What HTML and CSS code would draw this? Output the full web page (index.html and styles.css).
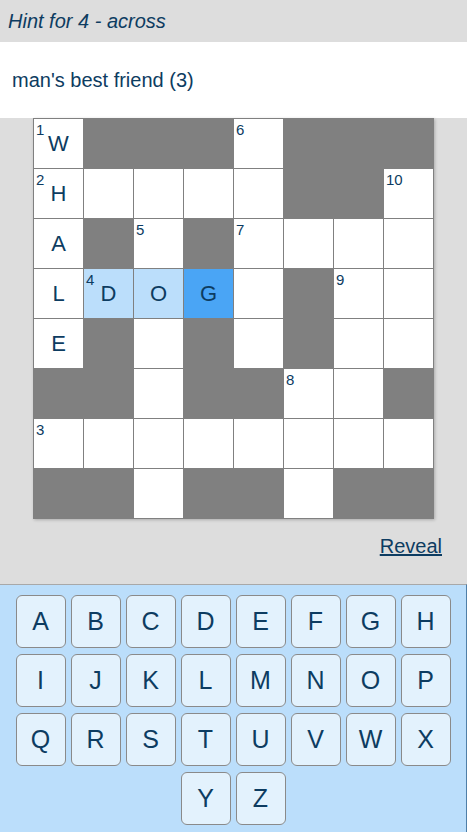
FILE: index.html
```html
<!DOCTYPE html>
<html>
<head>
<meta charset="utf-8">
<link rel="stylesheet" href="styles.css">
</head>
<body>
<div class="app">
  <div class="hint-title">Hint for 4 - across</div>
  <div class="hint-text">man's best friend (3)</div>
  <main class="board">
    <div class="grid">
      <div class="cell"><span class="num">1</span>W</div>
      <div class="cell blk"></div><div class="cell blk"></div><div class="cell blk"></div>
      <div class="cell"><span class="num">6</span></div>
      <div class="cell blk"></div><div class="cell blk"></div><div class="cell blk"></div>

      <div class="cell"><span class="num">2</span>H</div>
      <div class="cell"></div><div class="cell"></div><div class="cell"></div><div class="cell"></div>
      <div class="cell blk"></div><div class="cell blk"></div>
      <div class="cell"><span class="num">10</span></div>

      <div class="cell">A</div>
      <div class="cell blk"></div>
      <div class="cell"><span class="num">5</span></div>
      <div class="cell blk"></div>
      <div class="cell"><span class="num">7</span></div>
      <div class="cell"></div><div class="cell"></div><div class="cell"></div>

      <div class="cell">L</div>
      <div class="cell hl"><span class="num">4</span>D</div>
      <div class="cell hl">O</div>
      <div class="cell active">G</div>
      <div class="cell"></div>
      <div class="cell blk"></div>
      <div class="cell"><span class="num">9</span></div>
      <div class="cell"></div>

      <div class="cell">E</div>
      <div class="cell blk"></div>
      <div class="cell"></div>
      <div class="cell blk"></div>
      <div class="cell"></div>
      <div class="cell blk"></div>
      <div class="cell"></div><div class="cell"></div>

      <div class="cell blk"></div><div class="cell blk"></div>
      <div class="cell"></div>
      <div class="cell blk"></div><div class="cell blk"></div>
      <div class="cell"><span class="num">8</span></div>
      <div class="cell"></div>
      <div class="cell blk"></div>

      <div class="cell"><span class="num">3</span></div>
      <div class="cell"></div><div class="cell"></div><div class="cell"></div>
      <div class="cell"></div><div class="cell"></div><div class="cell"></div><div class="cell"></div>

      <div class="cell blk"></div><div class="cell blk"></div>
      <div class="cell"></div>
      <div class="cell blk"></div><div class="cell blk"></div>
      <div class="cell"></div>
      <div class="cell blk"></div><div class="cell blk"></div>
    </div>
    <div class="reveal-row"><a class="reveal" href="#">Reveal</a></div>
  </main>
  <div class="keyboard">
    <div class="keys">
      <button class="key">A</button><button class="key">B</button><button class="key">C</button><button class="key">D</button>
      <button class="key">E</button><button class="key">F</button><button class="key">G</button><button class="key">H</button>
      <button class="key">I</button><button class="key">J</button><button class="key">K</button><button class="key">L</button>
      <button class="key">M</button><button class="key">N</button><button class="key">O</button><button class="key">P</button>
      <button class="key">Q</button><button class="key">R</button><button class="key">S</button><button class="key">T</button>
      <button class="key">U</button><button class="key">V</button><button class="key">W</button><button class="key">X</button>
      <button class="key">Y</button><button class="key">Z</button>
    </div>
  </div>
</div>
</body>
</html>
```

FILE: styles.css
```css
* { box-sizing: border-box; }
html, body {
  margin: 0;
  padding: 0;
}
body {
  font-family: "Liberation Sans", Arial, sans-serif;
  color: #0d3c61;
  background: #dddddd;
}
.app {
  width: 467px;
  height: 832px;
  display: flex;
  flex-direction: column;
  overflow: hidden;
}
.hint-title {
  height: 42px;
  background: #dddddd;
  font-size: 20px;
  font-style: italic;
  padding-left: 8px;
  display: flex;
  align-items: center;
}
.hint-text {
  height: 76px;
  background: #ffffff;
  font-size: 20px;
  padding-left: 12px;
  display: flex;
  align-items: center;
}
.board {
  flex: 1;
  background: #dddddd;
  display: flex;
  flex-direction: column;
  align-items: center;
}
.grid {
  display: grid;
  grid-template-columns: repeat(8, 49px);
  grid-auto-rows: 49px;
  gap: 1px;
  padding: 1px;
  background: #808080;
  box-shadow: 1px 1px 3px rgba(0, 0, 0, 0.22);
}
.cell {
  position: relative;
  background: #ffffff;
  display: flex;
  align-items: center;
  justify-content: center;
  font-size: 22px;
}
.cell.blk { background: #808080; }
.cell.hl { background: #bbdefb; }
.cell.active { background: #4aa5f5; }
.num {
  position: absolute;
  left: 2px;
  top: 2px;
  font-size: 15px;
  line-height: 17px;
}
.reveal-row {
  align-self: stretch;
  display: flex;
  justify-content: flex-end;
  padding-right: 25px;
  margin-top: 16px;
}
.reveal {
  font-size: 20px;
  line-height: 23px;
  color: #0d3c61;
  text-decoration: underline;
}
.keyboard {
  height: 248px;
  background: #bbdefb;
  border-top: 1px solid #a8a8a8;
  border-right: 1px solid #4f7fa8;
  padding-top: 10px;
}
.keys {
  width: 435px;
  margin: 0 auto;
  display: flex;
  flex-wrap: wrap;
  justify-content: center;
  gap: 6px 5px;
}
.key {
  width: 50px;
  height: 53px;
  padding: 0;
  border: 1px solid #8a8a8a;
  border-radius: 6px;
  background: #e3f2fd;
  color: #0d3c61;
  font-family: "Liberation Sans", Arial, sans-serif;
  font-size: 25px;
}
```
